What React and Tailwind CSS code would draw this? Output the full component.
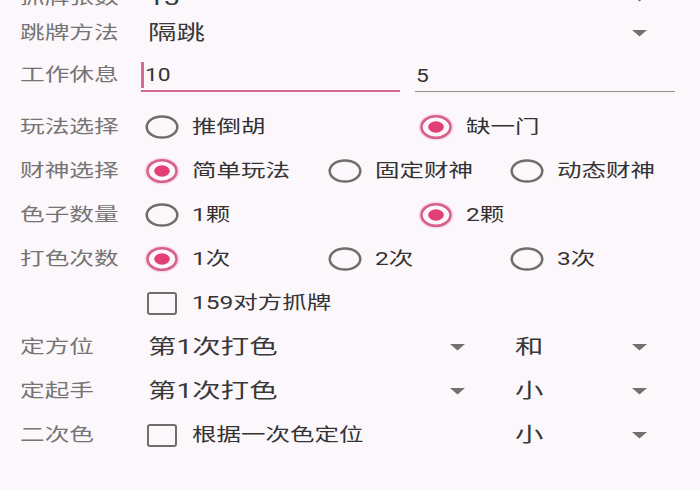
import React from "react";

const FONT = "font-['Roboto','Noto_Sans_CJK_SC',sans-serif]";

function T({ children, className = "" }) {
  return (
    <span className={"inline-block origin-left whitespace-nowrap leading-[26px] " + className}>
      {children}
    </span>
  );
}

function Label({ children }) {
  return (
    <div className="w-[121px] shrink-0 flex items-center">
      <T className="scale-x-[1.37] text-[18px] text-[#747474]">{children}</T>
    </div>
  );
}

function Radio({ checked }) {
  return (
    <svg width="36" height="28" viewBox="0 0 36 28" className="shrink-0">
      {checked ? (
        <>
          <ellipse cx="18" cy="14" rx="17.5" ry="13.5" fill="#f7dbe6" />
          <ellipse cx="18" cy="14" rx="14.5" ry="10.8" fill="#fdf7fb" stroke="#d6618c" strokeWidth="2.6" />
          <ellipse cx="18" cy="14" rx="7.8" ry="5.8" fill="#e33f77" />
        </>
      ) : (
        <ellipse cx="18" cy="14" rx="15.3" ry="10.6" fill="none" stroke="#6e6e6e" strokeWidth="2.5" />
      )}
    </svg>
  );
}

function Option({ checked, text }) {
  return (
    <div className="flex items-center gap-[12px]">
      <Radio checked={checked} />
      <T className="scale-x-[1.36] text-[18px] text-[#333333]">{text}</T>
    </div>
  );
}

function Check({ text }) {
  return (
    <div className="flex items-center gap-[15px] pl-[6px]">
      <div className="w-[30px] h-[23px] border-[2.5px] border-[#6e6e6e] rounded-[3px] shrink-0" />
      <T className="scale-x-[1.36] text-[18px] text-[#333333]">{text}</T>
    </div>
  );
}

function Arrow() {
  return (
    <svg width="15" height="7" viewBox="0 0 15 7" className="shrink-0">
      <polygon points="0,0 15,0 7.5,6.5" fill="#717171" />
    </svg>
  );
}

function Spinner({ value, className = "" }) {
  return (
    <div className={"flex items-center justify-between pl-[7px] pr-[10px] " + className}>
      <T className="scale-x-[1.42] text-[20px] text-[#383838]">{value}</T>
      <Arrow />
    </div>
  );
}

function RadioRow({ label, options, cols }) {
  return (
    <div className="flex h-[44px] items-center">
      <Label>{label}</Label>
      <div className={"pl-[3px] w-[551px] grid " + (cols === 3 ? "grid-cols-3" : "grid-cols-2")}>
        {options.map((o, i) => (
          <Option key={i} checked={o.checked} text={o.text} />
        ))}
      </div>
    </div>
  );
}

export default function App() {
  return (
    <div className={"w-[700px] h-[490px] overflow-hidden bg-[#fcf7fb] " + FONT}>
      <div className="-mt-[20px] pl-[20px] flex flex-col">
        <div className="flex h-[36px] items-center">
          <Label>抓牌张数</Label>
          <Spinner value="13" className="w-[516px]" />
        </div>
        <div className="flex h-[34px] items-center">
          <Label>跳牌方法</Label>
          <Spinner value="隔跳" className="w-[516px]" />
        </div>
        <div className="flex h-[55px] items-start">
          <div className="mt-[12px]">
            <Label>工作休息</Label>
          </div>
          <div className="flex">
            <div className="w-[259px] h-[42px] pt-[10px] border-b-2 border-[#d6689a] flex items-center">
              <div className="w-[2.5px] h-[26px] bg-[#d6689a] shrink-0" />
              <T className="scale-x-[1.2] text-[19px] text-[#333333] ml-[1px]">10</T>
            </div>
            <div className="ml-[15px] w-[260px] h-[42px] pt-[10px] border-b-[1.5px] border-[#8e8e8e] flex items-center">
              <T className="scale-x-[1.2] text-[19px] text-[#333333] ml-[1px]">5</T>
            </div>
          </div>
        </div>
        <RadioRow
          label="玩法选择"
          cols={2}
          options={[
            { text: "推倒胡", checked: false },
            { text: "缺一门", checked: true },
          ]}
        />
        <RadioRow
          label="财神选择"
          cols={3}
          options={[
            { text: "简单玩法", checked: true },
            { text: "固定财神", checked: false },
            { text: "动态财神", checked: false },
          ]}
        />
        <RadioRow
          label="色子数量"
          cols={2}
          options={[
            { text: "1颗", checked: false },
            { text: "2颗", checked: true },
          ]}
        />
        <RadioRow
          label="打色次数"
          cols={3}
          options={[
            { text: "1次", checked: true },
            { text: "2次", checked: false },
            { text: "3次", checked: false },
          ]}
        />
        <div className="flex h-[44px] items-center">
          <Label>{""}</Label>
          <Check text="159对方抓牌" />
        </div>
        <div className="flex h-[44px] items-center">
          <Label>定方位</Label>
          <Spinner value="第1次打色" className="w-[334px]" />
          <Spinner value="和" className="ml-[33px] w-[149px]" />
        </div>
        <div className="flex h-[44px] items-center">
          <Label>定起手</Label>
          <Spinner value="第1次打色" className="w-[334px]" />
          <Spinner value="小" className="ml-[33px] w-[149px]" />
        </div>
        <div className="flex h-[44px] items-center">
          <Label>二次色</Label>
          <div className="w-[334px]">
            <Check text="根据一次色定位" />
          </div>
          <Spinner value="小" className="ml-[33px] w-[149px]" />
        </div>
      </div>
    </div>
  );
}
